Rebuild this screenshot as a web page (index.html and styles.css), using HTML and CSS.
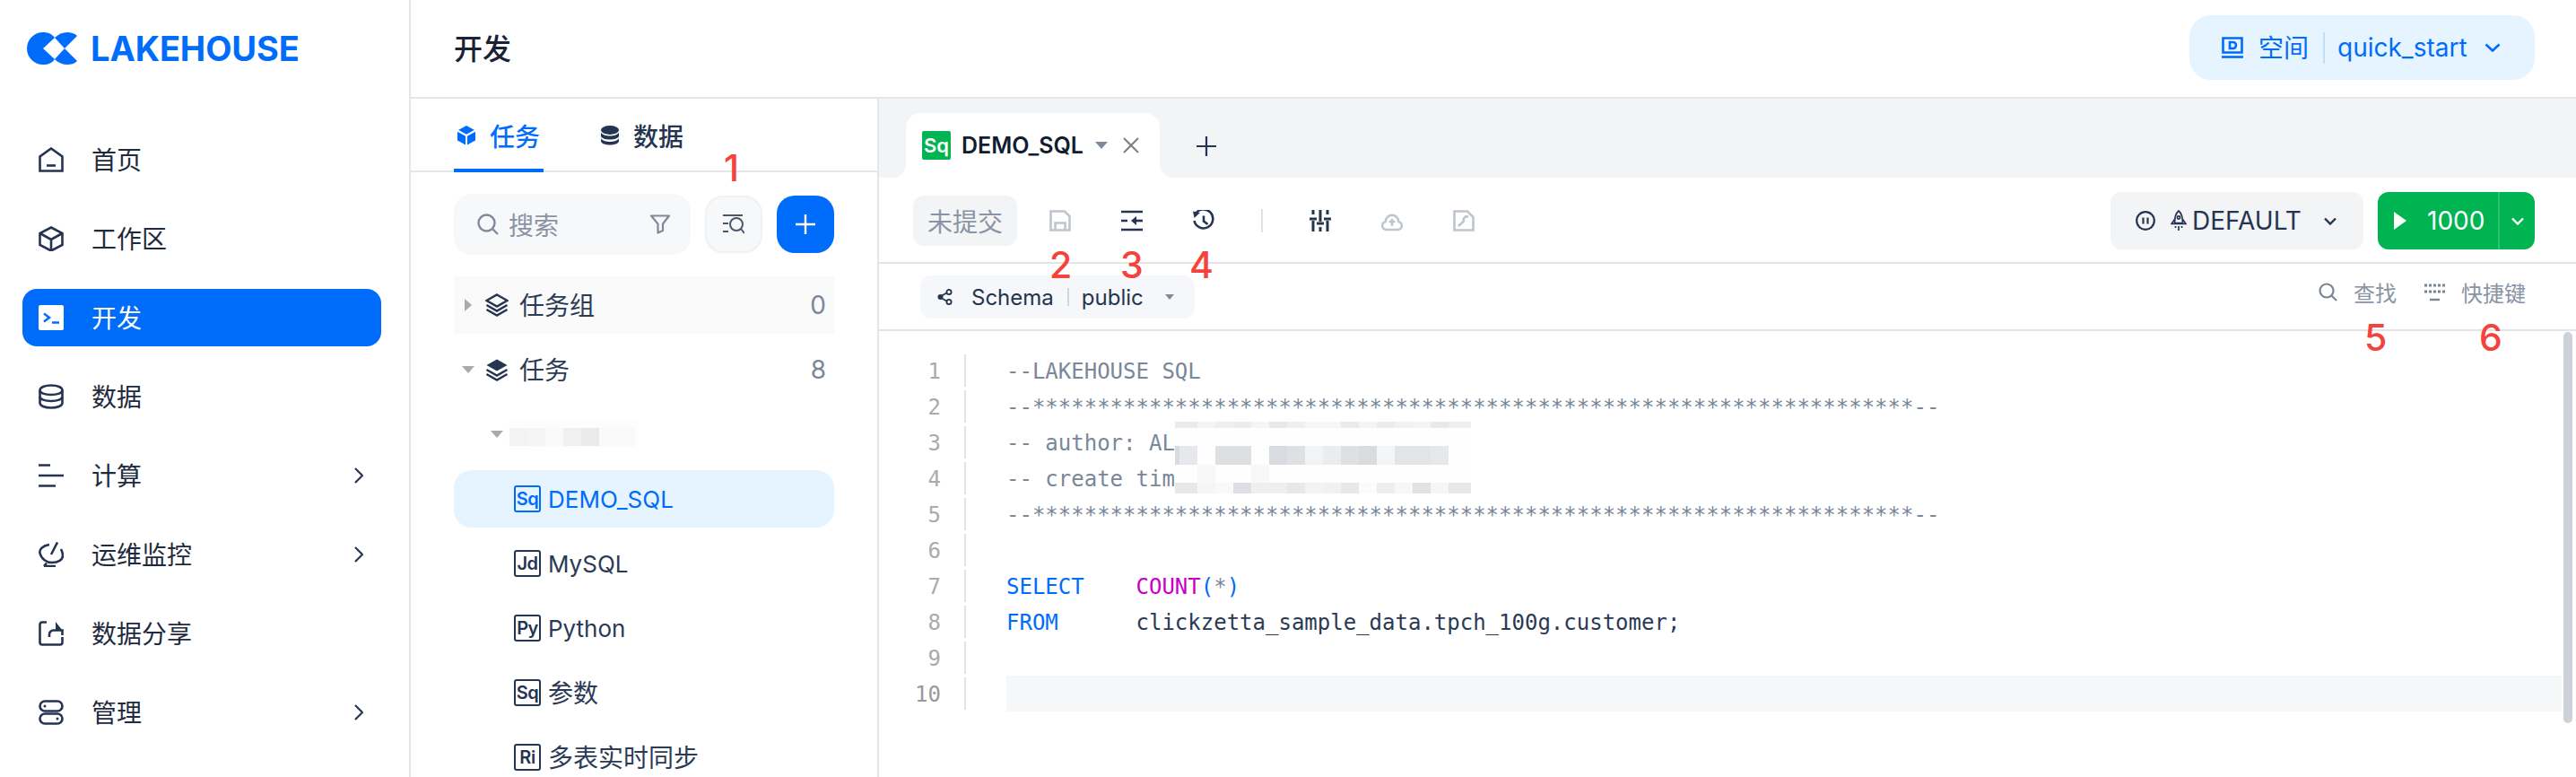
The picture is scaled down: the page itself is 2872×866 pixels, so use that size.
FILE: index.html
```html
<!DOCTYPE html>
<html lang="zh-CN">
<head>
<meta charset="utf-8">
<title>LAKEHOUSE 开发</title>
<link rel="stylesheet" href="styles.css">
</head>
<body>
<div class="app">
  <aside class="sidebar">
    <div class="logo">
      <svg class="logo-mark" viewBox="0 0 56 36"><path d="M18 18L31 6C28 2 24 0 18 0A18 18 0 0 0 18 36C24 36 28 34 31 30Z"/><path d="M31 6C35 2 40 0 45 0C49 0 53 1 56 4L42 18Z"/><path d="M31 30L42 18L56 32C53 35 49 36 45 36C40 36 35 34 31 30Z"/></svg>
      <span class="logo-text">LAKEHOUSE</span>
    </div>
    <nav class="nav">
      <a class="nav-item"><svg class="nav-icon" viewBox="0 0 28 28"><path d="M1.5 26.5V10.500L14 1.500L26.500 10.500V26.500Z"/><path d="M9 20.500H19"/></svg><span>首页</span></a>
      <a class="nav-item"><svg class="nav-icon" viewBox="0 0 28 28"><path d="M14 1.500L26.500 8V21L14 27.500L1.500 21V8Z"/><path d="M1.500 8L14 15L26.500 8M14 15V27.500"/></svg><span>工作区</span></a>
      <a class="nav-item active"><svg class="nav-icon" viewBox="0 0 28 28"><rect class="fill-white" width="28" height="28" rx="2"/><path class="stroke-blue" d="M6 9.500L12 14L6 18.500"/><path class="stroke-blue" d="M15 19.500H23"/></svg><span>开发</span></a>
      <a class="nav-item"><svg class="nav-icon" viewBox="0 0 28 28"><path d="M1.500 7C1.500 3.500 7 1.500 14 1.500S26.500 3.500 26.500 7V21C26.500 24.500 21 26.500 14 26.500S1.500 24.500 1.500 21Z"/><path d="M1.500 7C1.500 10 7 12 14 12S26.500 10 26.500 7M1.500 14C1.500 17 7 19 14 19S26.500 17 26.500 14"/></svg><span>数据</span></a>
      <a class="nav-item"><svg class="nav-icon" viewBox="0 0 28 28"><path d="M0 2.500H13M0 14H28M0 25.500H19"/></svg><span>计算</span><svg class="nav-arrow" viewBox="0 0 10 18"><path d="M1 1L9 9L1 17"/></svg></a>
      <a class="nav-item"><svg class="nav-icon" viewBox="0 0 28 28"><path d="M12 3C5 4 .5 8 1.500 12.500C3 19 9 23 15 23C22 23 27 20 27 15C27 12 26 10 25 8"/><path d="M21 .5L14 14"/><path d="M6 27H19M6 27L9 23.500"/></svg><span>运维监控</span><svg class="nav-arrow" viewBox="0 0 10 18"><path d="M1 1L9 9L1 17"/></svg></a>
      <a class="nav-item"><svg class="nav-icon" viewBox="0 0 28 28"><path d="M9 1.500H4A2.500 2.500 0 0 0 1.500 4V24A2.500 2.500 0 0 0 4 26.500H24A2.500 2.500 0 0 0 26.500 24V18"/><path d="M12 18V15A4.500 4.500 0 0 1 16.500 10.500H26.500V16"/><path class="fill-dark" d="M19 1L26.500 10.500H19Z"/></svg><span>数据分享</span></a>
      <a class="nav-item"><svg class="nav-icon" viewBox="0 0 28 28"><rect x="1.500" y="1.500" width="25" height="11" rx="5.500"/><rect x="1.500" y="15.500" width="25" height="11" rx="5.500"/><circle class="fill-dark" cx="7" cy="7" r="1.500"/><circle class="fill-dark" cx="21" cy="21" r="1.500"/></svg><span>管理</span><svg class="nav-arrow" viewBox="0 0 10 18"><path d="M1 1L9 9L1 17"/></svg></a>
    </nav>
  </aside>

  <div class="main">
    <header class="header">
      <h1 class="title">开发</h1>
      <div class="space">
        <svg class="space-icon" viewBox="0 0 24 24"><path d="M1.500 1.500H22.500V17.500H1.500Z"/><path d="M9 6H12.500A3.500 3.500 0 0 1 12.500 13H9Z"/><path d="M0 22.500H24"/></svg>
        <span class="space-label">空间</span>
        <i class="space-sep"></i>
        <span class="space-name">quick_start</span>
        <svg class="space-chev" viewBox="0 0 18 10"><path d="M1.500 1.500L9 8.500L16.500 1.500"/></svg>
      </div>
    </header>

    <div class="body">
      <section class="panel">
        <div class="panel-tabs">
          <div class="ptab on">
            <svg class="ptab-icon" viewBox="0 0 20 22"><path class="fill-blue" d="M10 0L20 5.500V16.500L10 22L0 16.500V5.500Z"/><path class="stroke-white" d="M0 5.500L10 11L20 5.500M10 11V22"/></svg>
            <span>任务</span>
          </div>
          <div class="ptab">
            <svg class="ptab-icon" viewBox="0 0 20 22"><ellipse class="fill-dark" cx="10" cy="5" rx="10" ry="5"/><path class="fill-dark" d="M0 8C2 10.500 6 11.500 10 11.500S18 10.500 20 8V11.500C20 14 15 15.500 10 15.500S0 14 0 11.500Z"/><path class="fill-dark" d="M0 14.500C2 17 6 18 10 18S18 17 20 14.500V17C20 20 15 21.500 10 21.500S0 20 0 17Z"/></svg>
            <span>数据</span>
          </div>
        </div>
        <div class="tools">
          <div class="search">
            <svg class="search-icon" viewBox="0 0 24 24"><circle cx="10.500" cy="10.500" r="9"/><path d="M17 17L23 23"/></svg>
            <span class="search-text">搜索</span>
            <svg class="filter-icon" viewBox="0 0 22 22"><path d="M1 1.500H21L14 10.500V18L8.500 20.500V10.500Z"/></svg>
          </div>
          <div class="locate">
            <svg viewBox="0 0 24 22"><path d="M0 1H22M0 10H6M0 19H6"/><circle cx="15" cy="11" r="7"/><path d="M20 16L24 21"/></svg>
          </div>
          <div class="add"><svg viewBox="0 0 22 22"><path d="M11 0V22M0 11H22"/></svg></div>
        </div>
        <div class="tree">
          <div class="row group">
            <span class="tri-slot"><i class="tri-right"></i></span>
            <svg class="layer-icon" viewBox="0 0 26 26"><path d="M13 1.500L24.500 8L13 14.500L1.500 8Z"/><path d="M1.500 13L13 19.500L24.500 13M1.500 18L13 24.500L24.500 18"/></svg>
            <span class="row-label">任务组</span>
            <span class="count">0</span>
          </div>
          <div class="row">
            <span class="tri-slot"><i class="tri-down"></i></span>
            <svg class="layer-icon" viewBox="0 0 26 26"><path class="fill-dark" d="M13 1.500L24.500 8L13 14.500L1.500 8Z"/><path d="M1.500 13L13 19.500L24.500 13M1.500 18L13 24.500L24.500 18"/></svg>
            <span class="row-label">任务</span>
            <span class="count">8</span>
          </div>
          <div class="row folder">
            <span class="tri-slot"><i class="tri-down"></i></span>
            <svg class="blur-name" width="143" height="30" viewBox="0 0 143 30"><rect width="143" height="30" fill="#fdfdfd"/><rect x="1" y="8" width="20" height="20" fill="#f3f3f4"/><rect x="21" y="8" width="20" height="20" fill="#f5f5f6"/><rect x="41" y="8" width="20" height="20" fill="#f9f9f9"/><rect x="61" y="8" width="20" height="20" fill="#f0f0f1"/><rect x="81" y="8" width="20" height="20" fill="#eaeaec"/><rect x="101" y="8" width="40" height="20" fill="#f9f9f9"/></svg>
          </div>
          <div class="row file on"><span class="ftype">Sq</span><span>DEMO_SQL</span></div>
          <div class="row file"><span class="ftype">Jd</span><span>MySQL</span></div>
          <div class="row file"><span class="ftype">Py</span><span>Python</span></div>
          <div class="row file"><span class="ftype">Sq</span><span class="cjk">参数</span></div>
          <div class="row file"><span class="ftype">Ri</span><span class="cjk">多表实时同步</span></div>
        </div>
      </section>

      <section class="editor">
        <div class="tabbar">
          <div class="etab">
            <span class="etab-type">Sq</span>
            <span class="etab-name">DEMO_SQL</span>
            <i class="etab-tri"></i>
            <svg class="etab-close" viewBox="0 0 18 18"><path d="M1 1L17 17M17 1L1 17"/></svg>
          </div>
          <svg class="etab-add" viewBox="0 0 22 22"><path d="M11 0V22M0 11H22"/></svg>
        </div>

        <div class="toolbar">
          <button class="uncommitted">未提交</button>
          <svg class="tool first muted" viewBox="0 0 24 24"><path d="M1.500 1.500H17L22.500 7V22.500H1.500Z"/><path d="M6.500 22.500V14.500H17.500V22.500"/></svg>
          <svg class="tool" viewBox="0 0 24 24"><path d="M0 2H24M0 22H24M0 12H7"/><path d="M24 12H13"/><path class="fill-dark" d="M11 12L17 7V17Z"/></svg>
          <svg class="tool" viewBox="0 0 24 24"><path d="M2.500 5A10.500 10.500 0 1 1 1.500 12"/><path class="fill-dark" d="M0 1.500L8 3L1.500 9Z"/><path d="M12 6.500V12.500L16.500 16"/></svg>
          <i class="tool-sep"></i>
          <svg class="tool sliders" viewBox="0 0 24 24"><path d="M4 0V5M4 12V24M12 0V13M12 19V24M20 0V5M20 12V24M0 10H8M8 15H16M16 10H24"/></svg>
          <svg class="tool muted" viewBox="0 0 25 24"><path d="M6 22.500A4.800 4.800 0 0 1 5 13A7.500 7.500 0 0 1 20 13A4.800 4.800 0 0 1 19 22.500Z"/><path class="fill-muted" d="M12.500 9.500L17 14H14V18H11V14H8Z"/></svg>
          <svg class="tool muted" viewBox="0 0 24 24"><path d="M1.500 1.500H16L22.500 8V22.500H1.500Z"/><path d="M6 18L12 12.500A3.500 3.500 0 0 1 17 8"/></svg>
          <div class="cluster">
            <svg class="pause" viewBox="0 0 22 22"><circle cx="11" cy="11" r="9.800"/><path d="M8.500 7.500V14.500M13.500 7.500V14.500"/></svg>
            <svg class="rocket" viewBox="0 0 18 24"><path d="M9 1C12.500 4 13.500 8 13.500 14.500H4.500C4.500 8 5.500 4 9 1Z"/><path d="M4.500 10.500L1 15.500H17L13.500 10.500"/><circle cx="9" cy="8.500" r="1.600"/><path d="M5.500 18V20M9 18V23M12.500 18V20"/></svg>
            <span class="cluster-name">DEFAULT</span>
            <svg class="cluster-chev" viewBox="0 0 14 9"><path d="M1 1.500L7 7.500L13 1.500"/></svg>
          </div>
          <div class="run">
            <div class="run-main">
              <svg class="play" viewBox="0 0 14 20"><path d="M0 0L14 10L0 20Z"/></svg>
              <span>1000</span>
            </div>
            <div class="run-more"><svg viewBox="0 0 14 9"><path d="M1 1.500L7 7.500L13 1.500"/></svg></div>
          </div>
        </div>

        <div class="schemabar">
          <div class="chip">
            <svg class="chip-icon" viewBox="0 0 18 18"><circle class="fill-dark" cx="3.500" cy="9" r="3"/><circle cx="13" cy="3.500" r="2.600"/><circle cx="13" cy="14.500" r="2.600"/><path d="M5 7.500L10.500 4.500M5 10.500L10.500 13.500"/></svg>
            <span class="chip-key">Schema</span>
            <i class="chip-sep"></i>
            <span class="chip-val">public</span>
            <i class="chip-tri"></i>
          </div>
          <div class="links">
            <div class="link"><svg class="link-search" viewBox="0 0 21 21"><circle cx="9" cy="9" r="7.500"/><path d="M14.500 14.500L20 20"/></svg><span>查找</span></div>
            <div class="link"><svg class="link-kbd" viewBox="0 0 25 20"><path class="kbd-dots" d="M1 2H24M1 9H24"/><path d="M7 18H18"/></svg><span>快捷键</span></div>
          </div>
        </div>

        <div class="code">
          <div class="line"><span class="num">1</span><i class="bar"></i><span class="src c">--LAKEHOUSE SQL</span></div>
          <div class="line"><span class="num">2</span><i class="bar"></i><span class="src c">--********************************************************************--</span></div>
          <div class="line"><span class="num">3</span><i class="bar"></i><span class="src c">-- author: AL</span></div>
          <div class="line"><span class="num">4</span><i class="bar"></i><span class="src c">-- create tim</span></div>
          <div class="line"><span class="num">5</span><i class="bar"></i><span class="src c">--********************************************************************--</span></div>
          <div class="line"><span class="num">6</span><i class="bar"></i><span class="src"></span></div>
          <div class="line"><span class="num">7</span><i class="bar"></i><span class="src"><b class="k">SELECT</b>    <b class="f">COUNT</b><b class="k">(</b><b class="c">*</b><b class="k">)</b></span></div>
          <div class="line"><span class="num">8</span><i class="bar"></i><span class="src"><b class="k">FROM</b>      clickzetta_sample_data.tpch_100g.customer;</span></div>
          <div class="line"><span class="num">9</span><i class="bar"></i><span class="src"></span></div>
          <div class="line current"><span class="num">10</span><i class="bar"></i><span class="src"></span></div>
          <svg class="mosaic" width="330" height="80" viewBox="0 0 330 80" shape-rendering="crispEdges">
            <rect width="330" height="80" fill="#fefefe"/>
            <rect x="0" y="0" width="25" height="7" fill="#e9eaec"/><rect x="25" y="0" width="20" height="7" fill="#f3f4f5"/><rect x="45" y="0" width="20" height="7" fill="#eeeff1"/><rect x="65" y="0" width="20" height="7" fill="#ebecee"/><rect x="85" y="0" width="20" height="7" fill="#f4f5f6"/><rect x="105" y="0" width="20" height="7" fill="#e6e8ea"/><rect x="125" y="0" width="20" height="7" fill="#eeeff1"/><rect x="145" y="0" width="40" height="7" fill="#f6f7f8"/><rect x="185" y="0" width="20" height="7" fill="#e9eaec"/><rect x="205" y="0" width="20" height="7" fill="#f3f4f5"/><rect x="225" y="0" width="20" height="7" fill="#ebecee"/><rect x="245" y="0" width="20" height="7" fill="#f0f1f2"/><rect x="265" y="0" width="20" height="7" fill="#f3f4f5"/><rect x="285" y="0" width="20" height="7" fill="#e8e9eb"/><rect x="305" y="0" width="25" height="7" fill="#eeeff1"/>
            <rect x="0" y="27" width="5" height="21" fill="#d8dbdf"/><rect x="5" y="27" width="20" height="21" fill="#e6e8eb"/><rect x="45" y="27" width="40" height="21" fill="#dddfe3"/><rect x="105" y="27" width="20" height="21" fill="#d8dbe0"/><rect x="125" y="27" width="20" height="21" fill="#dee0e4"/><rect x="145" y="27" width="20" height="21" fill="#f2f3f5"/><rect x="165" y="27" width="20" height="21" fill="#eaecee"/><rect x="185" y="27" width="20" height="21" fill="#dee0e4"/><rect x="205" y="27" width="20" height="21" fill="#d9dbdf"/><rect x="225" y="27" width="20" height="21" fill="#f3f5f7"/><rect x="245" y="27" width="40" height="21" fill="#e2e4e7"/><rect x="285" y="27" width="20" height="21" fill="#e6e8ea"/>
            <rect x="25" y="48" width="20" height="20" fill="#f6f8fa"/><rect x="85" y="48" width="20" height="20" fill="#f8f8f8"/>
            <rect x="0" y="68" width="25" height="12" fill="#e6e8ea"/><rect x="25" y="68" width="20" height="12" fill="#f4f6f7"/><rect x="45" y="68" width="20" height="12" fill="#f9f9f9"/><rect x="65" y="68" width="20" height="12" fill="#dcdfe3"/><rect x="85" y="68" width="40" height="12" fill="#eeeff1"/><rect x="125" y="68" width="20" height="12" fill="#e6e8ea"/><rect x="145" y="68" width="20" height="12" fill="#f2f3f5"/><rect x="165" y="68" width="20" height="12" fill="#f0f1f3"/><rect x="185" y="68" width="20" height="12" fill="#e6e8ea"/><rect x="205" y="68" width="20" height="12" fill="#fafbfc"/><rect x="225" y="68" width="20" height="12" fill="#eceef0"/><rect x="245" y="68" width="20" height="12" fill="#f6f7f7"/><rect x="265" y="68" width="20" height="12" fill="#e0e3e6"/><rect x="285" y="68" width="20" height="12" fill="#f5f6f7"/><rect x="305" y="68" width="25" height="12" fill="#e6e8ea"/>
          </svg>
          <i class="scrollbar"></i>
        </div>
      </section>
    </div>
  </div>

  <span class="mark mark-1">1</span>
  <span class="mark mark-2">2</span>
  <span class="mark mark-3">3</span>
  <span class="mark mark-4">4</span>
  <span class="mark mark-5">5</span>
  <span class="mark mark-6">6</span>
</div>
</body>
</html>
```

FILE: styles.css
```css
* { box-sizing: border-box; }
html, body { margin: 0; padding: 0; background: #fff; }
body { font-family: Inter, "Noto Sans CJK SC", sans-serif; color: #253450; }
svg { display: block; flex: none; fill: none; }
i { display: block; font-style: normal; }

.app { position: relative; display: flex; width: 2872px; height: 866px; overflow: hidden; }

/* shared svg paint helpers */
svg .fill-dark { fill: #253450; stroke: none; }
svg .fill-white { fill: #fff; stroke: none; }
svg .fill-blue { fill: #006cfb; stroke: none; }
svg .fill-muted { fill: #bfc5ce; stroke: none; }
svg .stroke-white { stroke: #fff; stroke-width: 2; fill: none; }
svg .stroke-blue { stroke: #006cfb; stroke-width: 2.5; fill: none; }

/* sidebar */
.sidebar { flex: none; width: 458px; border-right: 2px solid #e4e6ea; }
.logo { display: flex; align-items: center; height: 108px; padding-left: 30px; gap: 15px; }
.logo-mark { width: 56px; height: 36px; fill: #006cfb; }
.logo-text { font-size: 38px; font-weight: 700; color: #006cfb; line-height: 1; letter-spacing: -0.1px; }
.nav { display: flex; flex-direction: column; gap: 24px; margin: 38px 31px 0 25px; }
.nav-item { display: flex; align-items: center; height: 64px; padding: 0 20px 0 18px; border-radius: 16px; font-size: 28px; color: #1e2a3e; }
.nav-item span { padding-bottom: 2px; }
.nav-icon { width: 28px; height: 28px; margin-right: 31px; stroke: #253450; stroke-width: 2.6; }
.nav-arrow { width: 10px; height: 18px; margin-left: auto; stroke: #253450; stroke-width: 2.2; }
.nav-item.active { background: #006cfb; color: #fff; }

/* header */
.main { flex: 1; display: flex; flex-direction: column; min-width: 0; }
.header { flex: none; display: flex; align-items: center; justify-content: space-between; height: 110px; padding: 0 46px 0 48px; border-bottom: 2px solid #e4e6ea; }
.title { margin: 0; padding-bottom: 5px; font-size: 32px; font-weight: 500; color: #1a2335; }
.space { display: flex; align-items: center; width: 385px; height: 72px; margin-top: -2px; padding-left: 36px; background: #e6f4ff; border-radius: 24px; color: #006cfb; font-size: 28px; }
.space-icon { width: 24px; height: 24px; margin-right: 17px; stroke: #006cfb; stroke-width: 2.6; }
.space-label { padding-bottom: 2px; }
.space-sep { width: 2px; height: 35px; margin: 0 14px 0 16px; background: #c3dff5; }
.space-name { font-size: 28px; }
.space-chev { width: 18px; height: 10px; margin-left: 19px; stroke: #006cfb; stroke-width: 2.6; }

/* task panel */
.body { flex: 1; display: flex; min-height: 0; }
.panel { flex: none; width: 522px; border-right: 2px solid #e4e6ea; overflow: hidden; }
.panel-tabs { display: flex; gap: 60px; height: 82px; padding-left: 48px; border-bottom: 2px solid #e4e6ea; }
.ptab { display: flex; align-items: center; gap: 16px; height: 82px; padding: 0 4px; font-size: 28px; font-weight: 500; color: #253450; }
.ptab-icon { width: 20px; height: 22px; }
.ptab.on { color: #006cfb; border-bottom: 4px solid #006cfb; padding-top: 4px; }
.tools { display: flex; align-items: center; gap: 16px; margin: 24px 48px 0; }
.search { display: flex; align-items: center; width: 264px; height: 68px; padding: 0 23px 0 26px; background: #f7f8fa; border-radius: 20px; }
.search-icon { width: 24px; height: 24px; stroke: #7f8a9a; stroke-width: 2.4; }
.search-text { margin-left: 11px; font-size: 28px; color: #8a94a4; }
.filter-icon { width: 22px; height: 22px; margin-left: auto; stroke: #7f8a9a; stroke-width: 2.2; stroke-linejoin: round; }
.locate, .add { display: flex; align-items: center; justify-content: center; width: 64px; height: 64px; border-radius: 20px; }
.locate { background: #f7f8fa; border: 2px solid #f0f1f3; }
.locate svg { width: 24px; height: 22px; stroke: #4a566a; stroke-width: 2; }
.add { background: #006cfb; }
.add svg { width: 22px; height: 22px; stroke: #fff; stroke-width: 2.4; }
.tree { display: flex; flex-direction: column; gap: 8px; margin: 24px 48px 0; }
.row { flex: none; display: flex; align-items: center; height: 64px; padding-left: 6px; font-size: 28px; color: #2b3a55; }
.row.group { background: #fafafa; }
.row-label { padding-bottom: 2px; }
.tri-slot { display: flex; align-items: center; justify-content: center; width: 20px; margin-right: 9px; }
.tri-right { width: 0; height: 0; border-left: 8px solid #a9a9ae; border-top: 7px solid transparent; border-bottom: 7px solid transparent; }
.tri-down { width: 0; height: 0; border-top: 8px solid #a9a9ae; border-left: 7px solid transparent; border-right: 7px solid transparent; }
.layer-icon { width: 26px; height: 26px; margin-right: 12px; stroke: #253450; stroke-width: 2.4; }
.count { margin-left: auto; padding-right: 9px; color: #7a8799; }
.row.folder { padding-left: 38px; }
.row.folder .tri-slot { margin-right: 3px; }
.row.file { padding-left: 67px; gap: 8px; border-radius: 20px; font-size: 26px; }
.cjk { font-size: 28px; padding-bottom: 2px; }
.ftype { display: flex; align-items: center; justify-content: center; width: 30px; height: 30px; border: 2.5px solid currentColor; border-radius: 3px; font-size: 20px; font-weight: 600; line-height: 1; letter-spacing: -0.5px; color: #253450; }
.row.file.on { background: #e6f4ff; color: #006cfb; }
.row.file.on .ftype { color: #006cfb; }

/* editor */
.editor { flex: 1; display: flex; flex-direction: column; min-width: 0; }
.tabbar { flex: none; display: flex; height: 88px; padding: 16px 0 0 30px; background: #f2f4f6; }
.etab { position: relative; display: flex; align-items: center; width: 283px; height: 72px; padding-left: 18px; background: #fff; border-radius: 16px 16px 0 0; }
.etab::before, .etab::after { content: ""; position: absolute; bottom: 0; width: 16px; height: 16px; }
.etab::before { left: -16px; background: radial-gradient(circle at 0 0, #f2f4f6 16px, #fff 16.500px); }
.etab::after { right: -16px; background: radial-gradient(circle at 100% 0, #f2f4f6 16px, #fff 16.500px); }
.etab-type { display: flex; align-items: center; justify-content: center; width: 32px; height: 32px; background: #00b451; border-radius: 2px; color: #fff; font-size: 22px; font-weight: 600; line-height: 1; }
.etab-name { margin-left: 12px; font-size: 25px; font-weight: 600; color: #111c30; }
.etab-tri { width: 0; height: 0; margin-left: 13px; border-top: 8px solid #7f8a9a; border-left: 7px solid transparent; border-right: 7px solid transparent; }
.etab-close { width: 18px; height: 18px; margin-left: 17px; stroke: #7d7d7d; stroke-width: 2; }
.etab-add { width: 22px; height: 22px; margin: 26px 0 0 41px; stroke: #253450; stroke-width: 2.2; }

.toolbar { flex: none; display: flex; align-items: center; height: 96px; padding: 2px 46px 0 38px; border-bottom: 2px solid #e2e4e8; }
.uncommitted { width: 116px; height: 56px; padding: 0; border: 0; background: #f2f4f6; border-radius: 12px; font: inherit; font-size: 28px; color: #8a94a4; }
.tool { width: 24px; height: 24px; margin-right: 56px; stroke: #253450; stroke-width: 2.600; }
.tool.first { margin-left: 36px; }
.tool.muted { stroke: #bfc5ce; }
.tool.sliders { stroke-width: 3; }
.tool-sep { width: 2px; height: 26px; margin: 0 52px 0 -4px; background: #dfe2e8; }
.cluster { display: flex; align-items: center; width: 282px; height: 64px; margin-left: auto; padding-left: 28px; background: #f2f4f6; border-radius: 12px; }
.pause { width: 22px; height: 22px; stroke: #253450; stroke-width: 2.2; }
.rocket { width: 18px; height: 24px; margin-left: 17px; stroke: #253450; stroke-width: 1.700; }
.cluster-name { margin-left: 6px; font-size: 28px; color: #253450; }
.cluster-chev { width: 14px; height: 9px; margin-left: 25px; stroke: #253450; stroke-width: 2.400; }
.run { display: flex; width: 175px; height: 64px; margin-left: 16px; background: #00b451; border-radius: 12px; color: #fff; }
.run-main { display: flex; align-items: center; width: 136px; padding-left: 18px; font-size: 28px; border-right: 2px solid #2cc26f; }
.play { width: 14px; height: 20px; margin-right: 23px; fill: #fff; }
.run-more { flex: 1; display: flex; align-items: center; justify-content: center; }
.run-more svg { width: 14px; height: 9px; stroke: #fff; stroke-width: 2.400; }

.schemabar { flex: none; display: flex; align-items: center; justify-content: space-between; height: 75px; padding: 0 56px 0 46px; border-bottom: 2px solid #e2e4e8; }
.chip { display: flex; align-items: center; width: 306px; height: 48px; padding: 1px 0 0 19px; background: #f5f7fa; border-radius: 12px; font-size: 24px; color: #253450; }
.chip-icon { width: 18px; height: 18px; margin-right: 20px; stroke: #253450; stroke-width: 1.800; }
.chip-sep { width: 2px; height: 20px; margin: 0 14px 0 15px; background: #d3d7dd; }
.chip-tri { width: 0; height: 0; margin-left: 24px; border-top: 6px solid #7f8a9a; border-left: 5px solid transparent; border-right: 5px solid transparent; }
.links { display: flex; gap: 30px; margin-top: -10px; }
.link { display: flex; align-items: center; font-size: 24px; color: #8a94a4; }
.link-search { width: 21px; height: 21px; margin-right: 18px; stroke: #7a8594; stroke-width: 2.200; }
.link-kbd { width: 25px; height: 20px; margin-right: 17px; stroke: #7a8594; stroke-width: 2.400; }
.link-kbd .kbd-dots { stroke-dasharray: 3 2; stroke-width: 3; }

.code { position: relative; flex: 1; padding-top: 24px; font-family: "DejaVu Sans Mono", monospace; font-size: 24px; color: #2a3a55; }
.line { display: flex; align-items: center; height: 40px; }
.num { flex: none; width: 69px; padding-top: 2px; text-align: right; color: #aaaaaa; }
.bar { flex: none; width: 2px; height: 36px; margin-left: 26px; background: #dfe3ea; }
.src { flex: 1; height: 40px; margin: 0 16px 0 45px; padding-top: 2px; line-height: 38px; white-space: pre; }
.src b { font-weight: 400; }
.c { color: #7a8799; }
.k { color: #006cfb; }
.f { color: #c800c8; }
.line.current .src { background: #f6f7f9; }
.line.current .num { color: #999999; }
.mosaic { position: absolute; left: 330px; top: 101px; }
.scrollbar { position: absolute; right: 4px; top: 1px; width: 10px; height: 436px; background: #cdd2da; border-radius: 5px; }

/* annotation numerals */
.mark { position: absolute; font-size: 41px; font-weight: 500; line-height: 30px; color: #f4433c; }
.mark-1 { left: 807px; top: 172px; }
.mark-2 { left: 1170px; top: 280px; }
.mark-3 { left: 1249px; top: 280px; }
.mark-4 { left: 1326px; top: 280px; }
.mark-5 { left: 2636px; top: 361px; }
.mark-6 { left: 2764px; top: 361px; }
```
